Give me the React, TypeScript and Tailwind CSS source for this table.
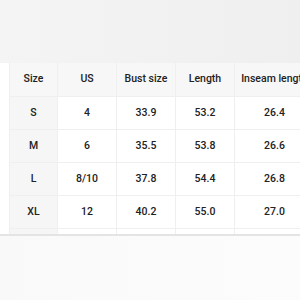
import React from 'react';

const rows = [
    { size: 'S', us: '4', bust: '33.9', length: '53.2', inseam: '26.4' },
    { size: 'M', us: '6', bust: '35.5', length: '53.8', inseam: '26.6' },
    { size: 'L', us: '8/10', bust: '37.8', length: '54.4', inseam: '26.8' },
    { size: 'XL', us: '12', bust: '40.2', length: '55.0', inseam: '27.0' },
];

const cell = 'border-r border-b border-[#efefef] text-center align-middle';

export default function App() {
    return (
        <div className="w-[300px] h-[300px] overflow-hidden bg-[#fafafa] flex flex-col text-[#222]" style={{ fontFamily: 'Roboto, "Liberation Sans", sans-serif' }}>
            <div className="h-[63px] shrink-0 bg-gradient-to-r from-[#f4f4f4] to-[#efefef]" />

            <div className="bg-white pl-[9px] overflow-hidden shrink-0">
                <table className="border-collapse table-fixed w-[305px] text-[10.5px] font-medium border-l border-[#efefef]">
                    <colgroup>
                        <col className="w-[48px]" />
                        <col className="w-[59px]" />
                        <col className="w-[59px]" />
                        <col className="w-[59px]" />
                        <col className="w-[80px]" />
                    </colgroup>
                    <thead>
                        <tr className="h-[33px] bg-[#f7f7f7]">
                            <th className={`${cell} font-medium`}>Size</th>
                            <th className={`${cell} font-medium`}>US</th>
                            <th className={`${cell} font-medium`}>Bust size</th>
                            <th className={`${cell} font-medium`}>Length</th>
                            <th className={`${cell} font-medium whitespace-nowrap overflow-hidden`}>Inseam length</th>
                        </tr>
                    </thead>
                    <tbody>
                        {rows.map((r) => (
                            <tr key={r.size} className="h-[33px]">
                                <td className={`${cell} bg-[#f6f6f6]`}>{r.size}</td>
                                <td className={cell}>{r.us}</td>
                                <td className={cell}>{r.bust}</td>
                                <td className={cell}>{r.length}</td>
                                <td className={cell}>{r.inseam}</td>
                            </tr>
                        ))}
                        <tr className="h-[6px]">
                            <td className="border-r border-[#efefef] bg-[#f6f6f6]" />
                            <td className="border-r border-[#efefef]" />
                            <td className="border-r border-[#efefef]" />
                            <td className="border-r border-[#efefef]" />
                            <td className="border-r border-[#efefef]" />
                        </tr>
                    </tbody>
                </table>
            </div>

            <div className="h-[2px] shrink-0 bg-[#e4e4e4]" />
            <div className="flex-1 bg-gradient-to-r from-[#f9f9f9] to-[#fcfcfc]" />
        </div>
    );
}
